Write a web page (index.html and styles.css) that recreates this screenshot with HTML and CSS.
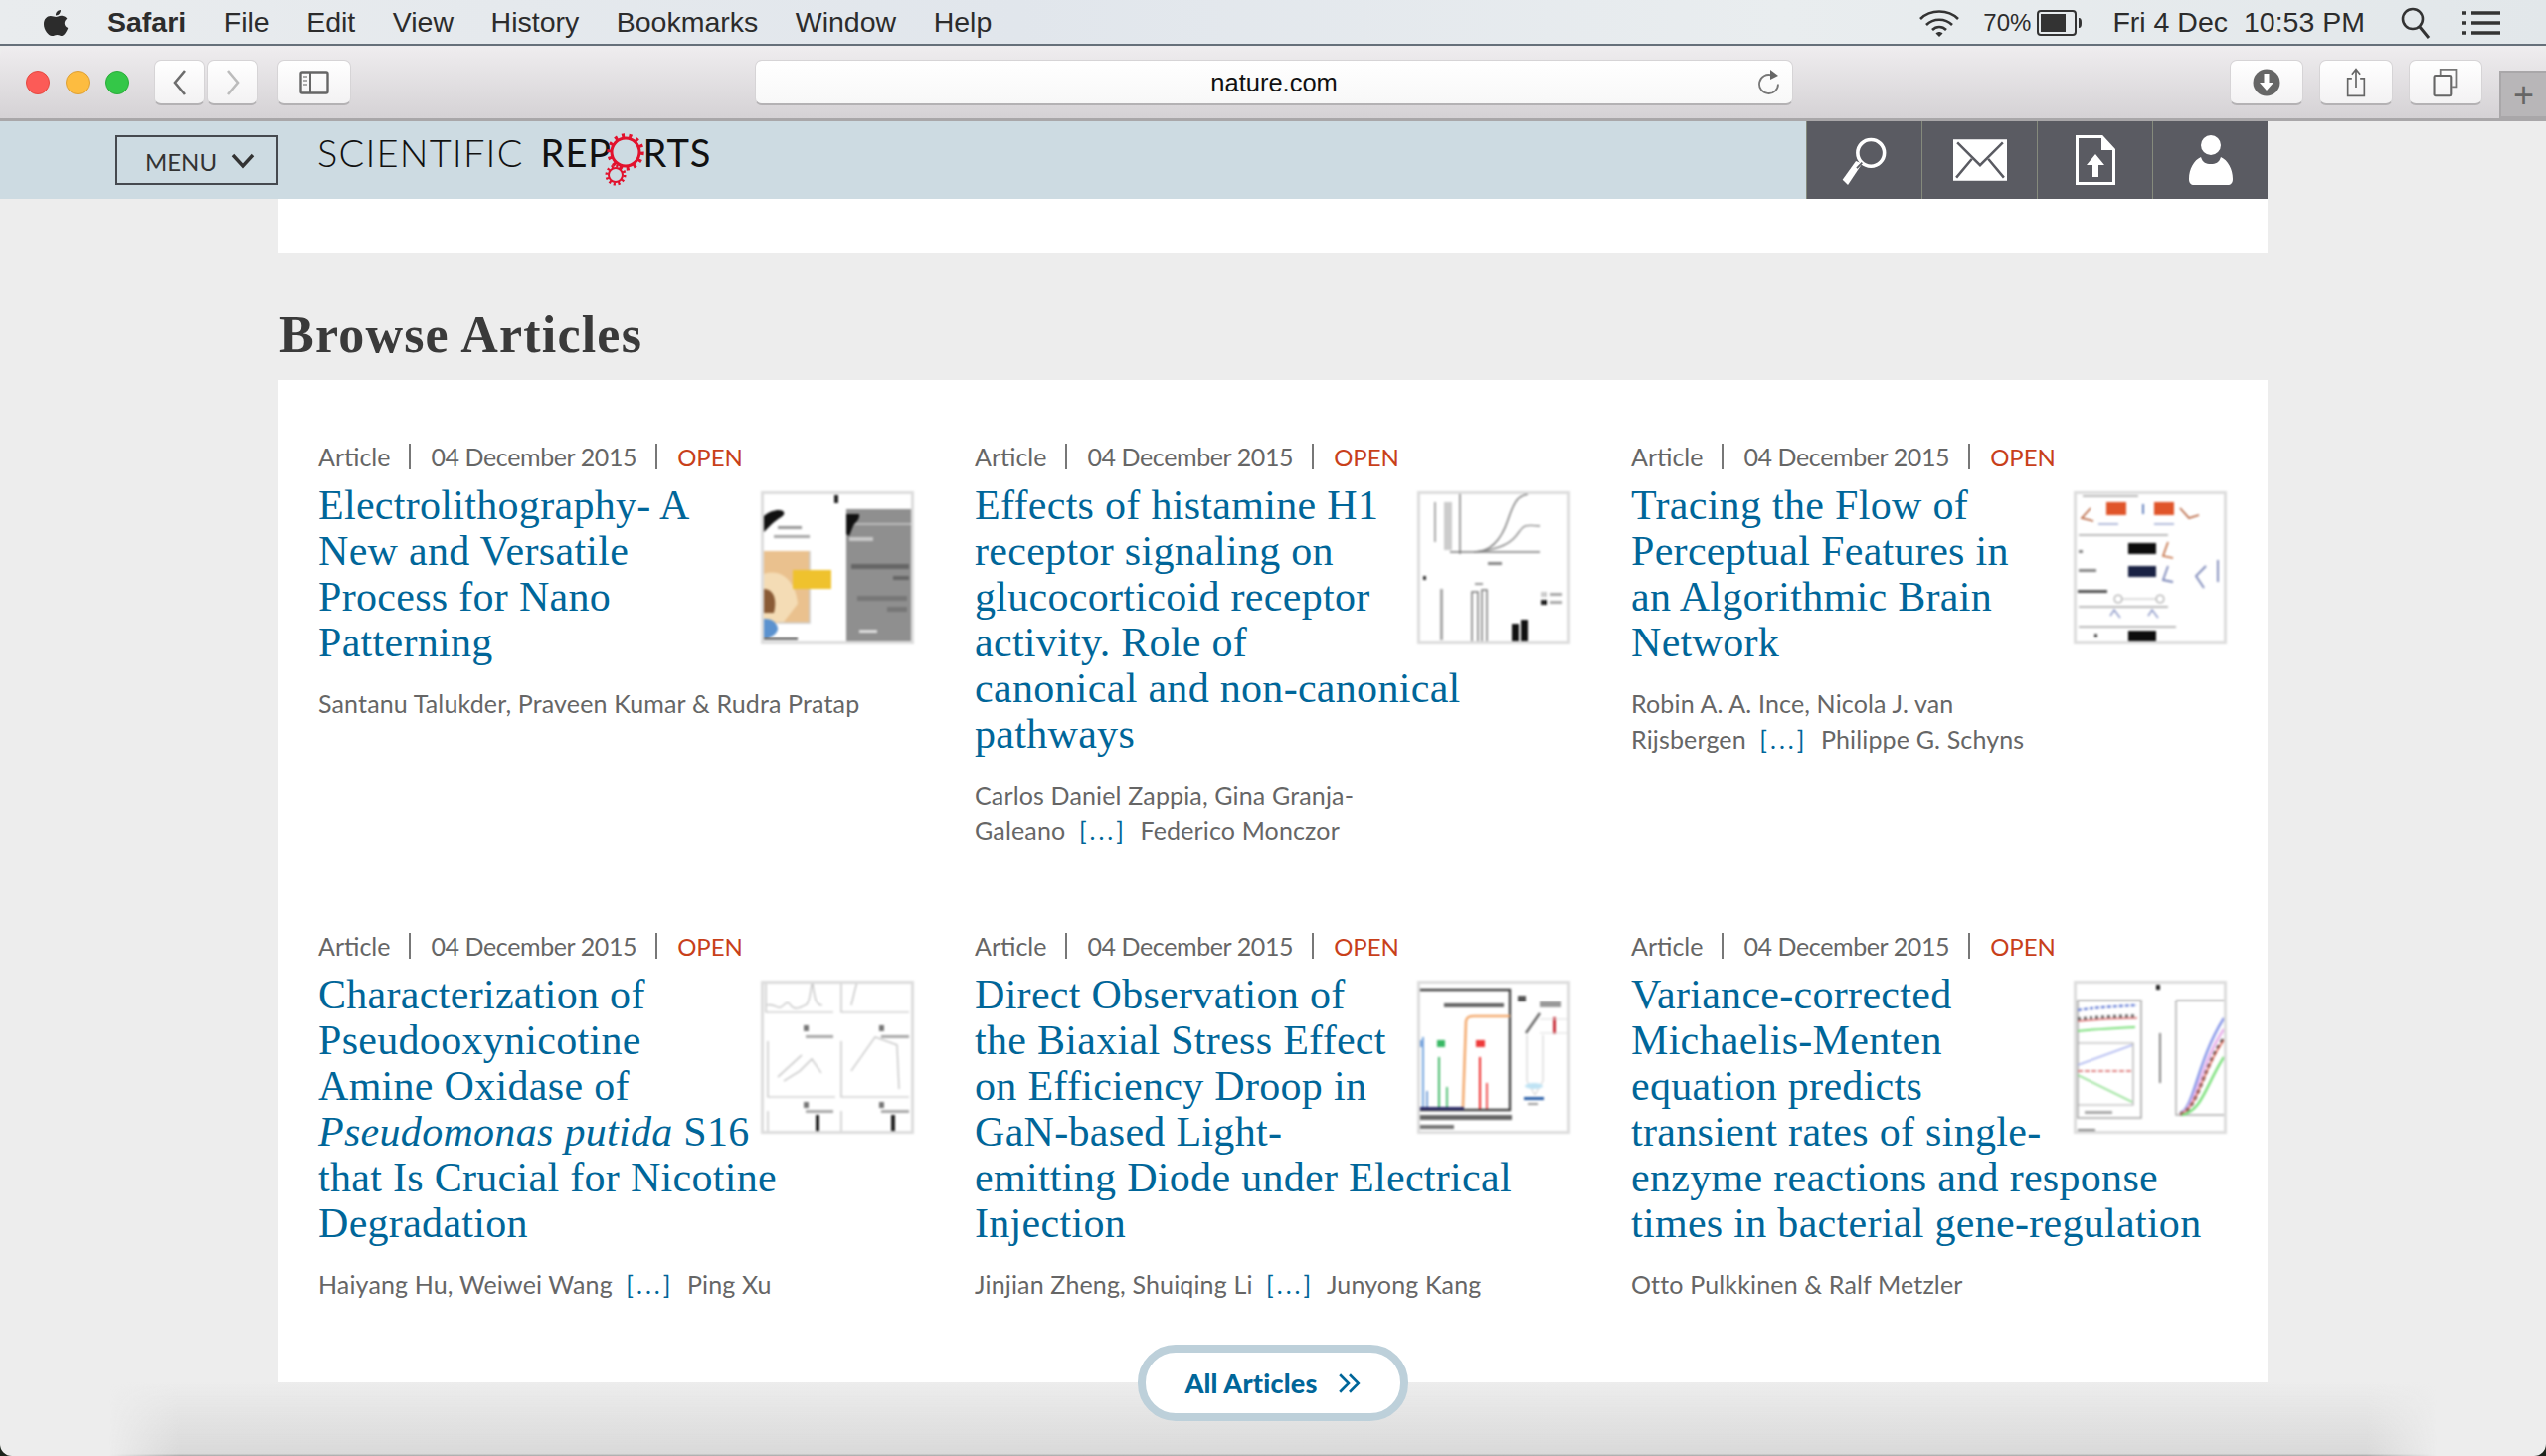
FILE: index.html
```html
<!DOCTYPE html>
<html lang="en">

<head>
    <meta charset="UTF-8">
    <meta name="viewport" content="width=device-width, initial-scale=1.0">
    <title>Scientific Reports</title>
    <link rel="stylesheet" href="styles.css">
</head>

<body>
    <div class="window">
        <div class="menubar">
            <svg class="apple" viewBox="0 0 28 32"><path d="M19 1c.2 2.400-1.900 5.700-5 5.500-.3-2.700 2-5.300 5-5.500zM14.300 8c1.200 0 2.800-1.300 5.200-1.300 1 0 4 .2 5.900 3-3.700 2.300-3.300 7.600.9 9.400-1 2.800-3.500 7.900-6.100 7.900-1.800 0-2.400-1.100-4.700-1.100-2.200 0-3 1.100-4.700 1.100C7.500 28 2 21.400 2 15.300 2 10 5.400 7 8.700 7c2.300 0 4.200 1 5.600 1z" transform="translate(0 2)"/></svg>
            <b class="menu-item">Safari</b>
            <span class="menu-item">File</span>
            <span class="menu-item">Edit</span>
            <span class="menu-item">View</span>
            <span class="menu-item">History</span>
            <span class="menu-item">Bookmarks</span>
            <span class="menu-item">Window</span>
            <span class="menu-item">Help</span>
            <div class="status">
                <svg class="wifi" viewBox="0 0 42 30"><g fill="none" stroke="#333" stroke-width="2.600"><path d="M2 11c10-10 28-10 38 0"/><path d="M8 17c7-7 19-7 26 0"/><path d="M14 22c4-4 10-4 14 0"/></g><path d="M17.500 25.500 21 29l3.500-3.500c-2-2-5-2-7 0z" fill="#333"/></svg>
                <span class="pct">70%</span>
                <svg class="battery" viewBox="0 0 46 28"><rect x="1" y="2" width="38" height="24" rx="3" fill="none" stroke="#333" stroke-width="2"/><rect x="4" y="5" width="25" height="18" fill="#333"/><path d="M42 9c2 0 3 1 3 5s-1 5-3 5z" fill="#333"/></svg>
                <span class="clock">Fri 4 Dec</span>
                <span class="clock clock-time">10:53 PM</span>
                <svg class="status-search" viewBox="0 0 30 32"><circle cx="12" cy="12" r="10" fill="none" stroke="#333" stroke-width="2.600"/><path d="M19 20l9 11" stroke="#333" stroke-width="3"/></svg>
                <svg class="status-list" viewBox="0 0 38 24"><path d="M0 2h4M9 2h29M0 12h4M9 12h29M0 22h4M9 22h29" stroke="#333" stroke-width="3.400"/></svg>
            </div>
        </div>

        <div class="toolbar">
            <div class="lights">
                <i class="light red"></i>
                <i class="light yellow"></i>
                <i class="light green"></i>
            </div>
            <div class="nav-pair">
                <div class="tool-btn back"><svg viewBox="0 0 20 30"><path d="M15 3 5 15l10 12" fill="none" stroke="#6d6d6d" stroke-width="2.600"/></svg></div>
                <div class="tool-btn back"><svg viewBox="0 0 20 30"><path d="M5 3l10 12L5 27" fill="none" stroke="#bcbcbc" stroke-width="2.600"/></svg></div>
            </div>
            <div class="tool-btn wide sidebar-btn"><svg viewBox="0 0 30 24"><rect x="1.500" y="1.500" width="27" height="21" rx="1.500" fill="none" stroke="#666" stroke-width="2.400"/><path d="M11 2v20" stroke="#666" stroke-width="2"/><path d="M4 6h4M4 10h4M4 14h4" stroke="#aaa" stroke-width="2"/></svg></div>
            <div class="urlbar">
                <span class="url">nature.com</span>
                <svg class="reload" viewBox="0 0 24 30"><path d="M14.500 7.500a9.500 9.500 0 1 0 6.500 9" fill="none" stroke="#777" stroke-width="1.800"/><path d="M13 2l8 6-8 4z" fill="#666"/></svg>
            </div>
            <div class="tool-btn wide"><svg viewBox="0 0 30 30"><circle cx="15" cy="15" r="13.500" fill="#666"/><path d="M12.500 6h5v9h4.500L15 23l-7-8h4.500z" fill="#fff"/></svg></div>
            <div class="tool-btn wide"><svg viewBox="0 0 26 36"><path d="M8 13H3v21h20V13h-5M13 24V3M8 8l5-6 5 6" fill="none" stroke="#666" stroke-width="2"/></svg></div>
            <div class="tool-btn wide"><svg viewBox="0 0 30 34"><path d="M9 8V2h19v20h-6" fill="none" stroke="#777" stroke-width="2"/><rect x="2" y="9" width="19" height="23" rx="1.500" fill="none" stroke="#666" stroke-width="2.400"/></svg></div>
            <div class="new-tab"></div>
        </div>

        <div class="site-nav">
            <div class="site-bar">
                <div class="menu-btn">MENU <svg class="menu-arrow" viewBox="0 0 24 16"><path d="M2 2l10 11L22 2" fill="none" stroke="#333" stroke-width="3.400"/></svg></div>
                <div class="logo">
                    <span class="logo-thin">SCIENTIFIC</span>
                    <span class="logo-bold">REP<span class="logo-o">O</span>RTS</span>
                    <svg class="logo-gears" viewBox="0 0 48 66">
                        <g fill="none" stroke="#e2122d">
                            <circle cx="23" cy="19" r="14" stroke-width="3"/>
                            <circle cx="23" cy="19" r="16.500" stroke-width="4.400" stroke-dasharray="3 4.330"/>
                            <circle cx="13" cy="42" r="7" stroke-width="2"/>
                            <circle cx="13" cy="42" r="9" stroke-width="3" stroke-dasharray="2.200 2.510"/>
                        </g>
                    </svg>
                </div>
                <div class="site-icons">
                    <div class="site-icon"><svg viewBox="0 0 54 56"><circle cx="34" cy="20" r="15" fill="none" stroke="#fff" stroke-width="4"/><path d="M24 32l-7-3-15 21 6 6z" fill="#fff"/><path d="M24 31l-6 6" stroke="#5a5b62" stroke-width="2"/></svg></div>
                    <div class="site-icon"><svg viewBox="0 0 52 40"><rect width="52" height="40" fill="#fff"/><path d="M4 3l22 22L48 3M3 37l15-18M49 37 34 19" fill="none" stroke="#5a5b62" stroke-width="2.400"/></svg></div>
                    <div class="site-icon"><svg viewBox="0 0 40 50"><path d="M1.500 1.500h25l12 13v34h-37z" fill="none" stroke="#fff" stroke-width="3"/><path d="M26 2v13h12z" fill="#fff"/><path d="M20 19l9 11h-6v12h-6V30h-6z" fill="#fff"/></svg></div>
                    <div class="site-icon"><svg viewBox="0 0 46 50"><ellipse cx="23" cy="10" rx="10" ry="10" fill="#fff"/><path d="M13 22c2 6 5 7 10 7s8-1 10-7c7 3 12 12 12 22 0 4-2 6-5 6H6c-3 0-5-2-5-6 0-10 5-19 12-22z" fill="#fff"/></svg></div>
                </div>
            </div>
        </div>

        <div class="page">
            <div class="strip"></div>
            <h1 class="section-title">Browse Articles</h1>

            <div class="card">
                <div class="article">
                    <div class="meta"><span>Article</span><i></i><span class="date">04 December 2015</span><i></i><span class="open">OPEN</span></div>
                    <svg class="thumb" viewBox="0 0 148 148">
                        <path d="M0 22c6-6 18-8 20-4 2 4-6 6-12 12l-8 8z" fill="#111"/>
                        <rect x="14" y="32" width="24" height="3" fill="#999"/>
                        <rect x="10" y="41" width="36" height="3" fill="#aaa"/>
                        <rect x="0" y="57" width="46" height="72" fill="#eac18e"/>
                        <path d="M0 80c18-6 32 8 34 30l-14 18H0z" fill="#f4dcb5"/>
                        <path d="M0 95c8 0 14 8 10 24H0z" fill="#8a5b36"/>
                        <path d="M46 57v72H14" fill="none" stroke="#ccc" stroke-width="1.500"/>
                        <rect x="29" y="76" width="39" height="19" fill="#efc22e"/>
                        <path d="M0 125c10-1 14 6 14 10s-6 9-14 10z" fill="#5b92cf"/>
                        <rect x="0" y="144" width="34" height="3" fill="#777"/>
                        <rect x="71" y="1" width="4" height="8" fill="#222"/>
                        <rect x="83" y="15" width="65" height="133" fill="#8f8f8f"/>
                        <rect x="83" y="29" width="65" height="2" fill="#bbb"/>
                        <path d="M83 20h13c1 6-4 8-6 12l-4 10-3-2z" fill="#111"/>
                        <rect x="86" y="43" width="24" height="4" fill="#c8c8c8"/>
                        <rect x="88" y="70" width="58" height="5" fill="#666"/>
                        <rect x="130" y="82" width="16" height="4" fill="#666"/>
                        <rect x="94" y="102" width="50" height="5" fill="#777"/>
                        <rect x="124" y="113" width="20" height="5" fill="#777"/>
                        <rect x="96" y="136" width="18" height="3" fill="#ddd"/>
                    </svg>
                    <h2 class="title">Electrolithography- A<br>New and Versatile<br>Process for Nano<br>Patterning</h2>
                    <p class="authors">Santanu Talukder, Praveen Kumar &amp; Rudra Pratap</p>
                </div>

                <div class="article">
                    <div class="meta"><span>Article</span><i></i><span class="date">04 December 2015</span><i></i><span class="open">OPEN</span></div>
                    <svg class="thumb" viewBox="0 0 148 148">
                        <g fill="none" stroke="#777" stroke-width="1.400">
                            <path d="M40 0v60M30 58h90"/>
                            <path d="M54 58c14 0 26-8 34-32S100 2 108 0"/>
                            <path d="M54 58c20-2 34-6 42-16s6-12 24-10" stroke="#888"/>
                        </g>
                        <rect x="14" y="8" width="2" height="40" fill="#aaa"/>
                        <rect x="24" y="8" width="8" height="48" fill="#ccc"/>
                        <rect x="68" y="68" width="14" height="3" fill="#888"/>
                        <rect x="3" y="82" width="3" height="4" fill="#333"/>
                        <rect x="20" y="95" width="3" height="52" fill="#aaa"/>
                        <path d="M52 148v-50h6v50M62 148v-52h5v52M55 90h8" fill="#fff" stroke="#777" stroke-width="1.500"/>
                        <rect x="92" y="130" width="7" height="18" fill="#111"/>
                        <rect x="101" y="126" width="7" height="22" fill="#111"/>
                        <rect x="121" y="98" width="7" height="5" fill="#ccc"/>
                        <rect x="121" y="106" width="7" height="5" fill="#222"/>
                        <rect x="131" y="99" width="12" height="3" fill="#aaa"/>
                        <rect x="131" y="107" width="12" height="3" fill="#aaa"/>
                    </svg>
                    <h2 class="title">Effects of histamine H1<br>receptor signaling on<br>glucocorticoid receptor<br>activity. Role of<br>canonical and non-canonical<br>pathways</h2>
                    <p class="authors">Carlos Daniel Zappia, Gina Granja-<br>Galeano <span class="more">[...]</span> Federico Monczor</p>
                </div>

                <div class="article">
                    <div class="meta"><span>Article</span><i></i><span class="date">04 December 2015</span><i></i><span class="open">OPEN</span></div>
                    <svg class="thumb" viewBox="0 0 148 148">
                        <rect x="6" y="1" width="56" height="2" fill="#bbb"/>
                        <rect x="30" y="8" width="20" height="13" fill="#e0552a"/>
                        <rect x="78" y="8" width="20" height="13" fill="#e0552a"/>
                        <rect x="66" y="10" width="2" height="10" fill="#6a86c0"/>
                        <path d="M14 14 5 24l12 3M104 14l9 10 10-3" fill="none" stroke="#b6603a" stroke-width="1.600"/>
                        <path d="M22 30h20M78 30h20" stroke="#9aa6d0" stroke-width="1.500"/>
                        <rect x="2" y="40" width="90" height="2" fill="#bbb"/>
                        <rect x="52" y="49" width="28" height="11" fill="#0d0d0d"/>
                        <path d="M92 48l-5 14 10 2" fill="none" stroke="#c26a3d" stroke-width="1.600"/>
                        <rect x="2" y="56" width="4" height="3" fill="#888"/>
                        <rect x="52" y="72" width="28" height="11" fill="#1a2244"/>
                        <path d="M92 72l-5 14 10 2M130 72l-10 10 8 12M142 66v22" fill="none" stroke="#7a86b8" stroke-width="1.800"/>
                        <rect x="2" y="75" width="18" height="3" fill="#888"/>
                        <rect x="1" y="96" width="30" height="3" fill="#555"/>
                        <circle cx="42" cy="105" r="4" fill="none" stroke="#999"/>
                        <circle cx="84" cy="105" r="4" fill="none" stroke="#999"/>
                        <path d="M46 105h34" stroke="#bbb"/>
                        <rect x="2" y="112" width="90" height="2" fill="#bbb"/>
                        <path d="M34 122l4-6 6 8M72 122l4-6 6 8" fill="none" stroke="#8b97c7" stroke-width="1.400"/>
                        <rect x="2" y="132" width="98" height="2" fill="#bbb"/>
                        <rect x="52" y="137" width="28" height="11" fill="#0d0d0d"/>
                        <rect x="18" y="140" width="3" height="4" fill="#555"/>
                    </svg>
                    <h2 class="title">Tracing the Flow of<br>Perceptual Features in<br>an Algorithmic Brain<br>Network</h2>
                    <p class="authors">Robin A. A. Ince, Nicola J. van<br>Rijsbergen <span class="more">[...]</span> Philippe G. Schyns</p>
                </div>

                <div class="article">
                    <div class="meta"><span>Article</span><i></i><span class="date">04 December 2015</span><i></i><span class="open">OPEN</span></div>
                    <svg class="thumb" viewBox="0 0 148 148">
                        <g fill="none" stroke="#bbb" stroke-width="1.200">
                            <path d="M2 0v29h68M78 0v29h68"/>
                            <path d="M3 22c8-2 10 4 14 2s6-8 10-2 10 2 16-1c4-4 4-22 6-23M49 0c2 14 3 22 10 22"/>
                            <path d="M88 22c2-8 3-14 6-24"/>
                            <path d="M4 58v56h68M78 58v56h68"/>
                            <path d="M20 98l16-10 12-12 10 14M14 94l24-22M88 88l24-34 22 8 2 44"/>
                        </g>
                        <rect x="42" y="52" width="28" height="3" fill="#aaa"/>
                        <rect x="118" y="52" width="28" height="3" fill="#aaa"/>
                        <rect x="40" y="42" width="5" height="6" fill="#777"/>
                        <rect x="116" y="42" width="5" height="6" fill="#777"/>
                        <rect x="42" y="127" width="28" height="3" fill="#aaa"/>
                        <rect x="118" y="127" width="28" height="3" fill="#aaa"/>
                        <rect x="40" y="119" width="5" height="6" fill="#777"/>
                        <rect x="116" y="119" width="5" height="6" fill="#777"/>
                        <path d="M4 128v20M78 128v20" stroke="#ccc" stroke-width="1.600"/>
                        <rect x="52" y="132" width="4" height="16" fill="#222"/>
                        <rect x="128" y="132" width="4" height="16" fill="#222"/>
                    </svg>
                    <h2 class="title">Characterization of<br>Pseudooxynicotine<br>Amine Oxidase of<br><em>Pseudomonas putida</em> S16<br>that Is Crucial for Nicotine<br>Degradation</h2>
                    <p class="authors">Haiyang Hu, Weiwei Wang <span class="more">[...]</span> Ping Xu</p>
                </div>

                <div class="article">
                    <div class="meta"><span>Article</span><i></i><span class="date">04 December 2015</span><i></i><span class="open">OPEN</span></div>
                    <svg class="thumb" viewBox="0 0 148 148">
                        <path d="M0 6h90v121H0" fill="none" stroke="#444" stroke-width="2.400"/>
                        <rect x="24" y="20" width="60" height="4" fill="#666"/>
                        <path d="M43 124l3-86c1-4 3-5 8-5h36" fill="none" stroke="#f4ac72" stroke-width="2.600"/>
                        <path d="M3 54v72" stroke="#6a9fdc" stroke-width="1.800"/>
                        <path d="M19 74v52" stroke="#2fb45a" stroke-width="1.800"/>
                        <path d="M60 74v52" stroke="#ee2a2a" stroke-width="2"/>
                        <path d="M67 100v26" stroke="#ee2a2a" stroke-width="1.600"/>
                        <path d="M27 104v22" stroke="#2fb45a" stroke-width="1.600"/>
                        <path d="M7 108v18" stroke="#5a8ed0" stroke-width="1.600"/>
                        <rect x="0" y="57" width="4" height="7" fill="#7aa6de"/>
                        <rect x="17" y="57" width="8" height="7" fill="#39b864"/>
                        <rect x="56" y="57" width="9" height="7" fill="#ee3a3a"/>
                        <rect x="0" y="124" width="44" height="3" fill="#2a2a66"/>
                        <rect x="0" y="132" width="92" height="5" fill="#666"/>
                        <rect x="0" y="142" width="34" height="4" fill="#777"/>
                        <rect x="98" y="12" width="8" height="6" fill="#555"/>
                        <path d="M106 50l14-20" stroke="#666" stroke-width="2.400"/>
                        <path d="M107 52v46l8 14 8-14V52" fill="none" stroke="#ccc"/>
                        <rect x="120" y="18" width="22" height="6" fill="#999"/>
                        <rect x="134" y="34" width="3" height="17" fill="#c9303a"/>
                        <path d="M120 36h28M120 50h28" stroke="#ddd"/>
                        <ellipse cx="114" cy="103" rx="9" ry="3" fill="#bfe3f4"/>
                        <rect x="104" y="114" width="20" height="3" fill="#2a5fa8"/>
                        <rect x="108" y="120" width="10" height="2" fill="#999"/>
                    </svg>
                    <h2 class="title">Direct Observation of<br>the Biaxial Stress Effect<br>on Efficiency Droop in<br>GaN-based Light-<br>emitting Diode under Electrical<br>Injection</h2>
                    <p class="authors">Jinjian Zheng, Shuiqing Li <span class="more">[...]</span> Junyong Kang</p>
                </div>

                <div class="article">
                    <div class="meta"><span>Article</span><i></i><span class="date">04 December 2015</span><i></i><span class="open">OPEN</span></div>
                    <svg class="thumb" viewBox="0 0 148 148">
                        <rect x="1" y="17" width="64" height="118" fill="none" stroke="#aaa" stroke-width="1.600"/>
                        <path d="M1 60h56v62H1" fill="none" stroke="#aaa" stroke-width="1.200"/>
                        <path d="M1 27c20-3 40-4 60-5" stroke="#6e85d8" stroke-width="2.400" stroke-dasharray="4 2" fill="none"/>
                        <path d="M1 36c20-2 40-3 60-3" stroke="#666" stroke-width="3.400" stroke-dasharray="3 3" fill="none"/>
                        <path d="M1 38c20-2 40-3 60-3" stroke="#e07070" stroke-width="1.400" fill="none"/>
                        <path d="M1 48c20-2 40-3 58-4" stroke="#7ce07c" stroke-width="2" fill="none"/>
                        <path d="M1 82l55-20" stroke="#a9b3ef" stroke-width="1.800"/>
                        <path d="M1 88h55" stroke="#e08686" stroke-width="2" stroke-dasharray="5 2"/>
                        <path d="M1 92l55 27" stroke="#8fe08f" stroke-width="1.800"/>
                        <rect x="8" y="128" width="28" height="3" fill="#aaa"/>
                        <rect x="1" y="146" width="18" height="2" fill="#888"/>
                        <rect x="80" y="1" width="4" height="5" fill="#222"/>
                        <path d="M100 17h48M100 17v115h48" fill="none" stroke="#aaa" stroke-width="1.400"/>
                        <rect x="83" y="50" width="2" height="50" fill="#888"/>
                        <path d="M104 130c14-4 16-50 44-95" stroke="#8494e8" stroke-width="2.400" fill="none"/>
                        <path d="M104 131c16-4 20-50 44-85" stroke="#eab8ec" stroke-width="3" fill="none"/>
                        <path d="M104 131c18-4 22-44 44-76" stroke="#444" stroke-width="3" stroke-dasharray="4 3" fill="none"/>
                        <path d="M104 131c18-4 22-44 44-74" stroke="#e46a5a" stroke-width="1.400" fill="none"/>
                        <path d="M106 132c20-4 24-30 42-58" stroke="#7ae07a" stroke-width="2.400" fill="none"/>
                    </svg>
                    <h2 class="title">Variance-corrected<br>Michaelis-Menten<br>equation predicts<br>transient rates of single-<br>enzyme reactions and response<br>times in bacterial gene-regulation</h2>
                    <p class="authors">Otto Pulkkinen &amp; Ralf Metzler</p>
                </div>
            </div>

            <div class="all-row">
                <a class="all-btn">All Articles <svg class="chevrons" viewBox="0 0 22 20"><path d="M2 2l8 8-8 8M11 2l8 8-8 8" fill="none" stroke="#069" stroke-width="2.400"/></svg></a>
            </div>
        </div>
    </div>
</body>

</html>
```

FILE: styles.css
```css
* {
    box-sizing: border-box;
}

html,
body {
    margin: 0;
    padding: 0;
    height: 100%;
}

body {
    background: #1c241c;
    overflow: hidden;
}

.window {
    position: relative;
    display: flex;
    flex-direction: column;
    height: 1464px;
    overflow: hidden;
    background: #ededed;
    border-radius: 0 0 12px 12px;
    font-family: "Liberation Sans", Arial, sans-serif;
}

/* shadow at the bottom of the page */
.window::after {
    content: "";
    position: absolute;
    left: 110px;
    right: 110px;
    bottom: 0;
    height: 74px;
    background: linear-gradient(#ededed00, #d9d9d9 97%, #a5a5a5);
    -webkit-mask-image: linear-gradient(90deg, transparent, #000 3%, #000 97%, transparent);
}

/* mac menu bar */
.menubar {
    display: flex;
    align-items: center;
    flex: none;
    height: 46px;
    padding: 1px 46px 0 42px;
    background: linear-gradient(90deg, #e9ecee, #e1e6ec 40%, #e9edef 70%, #e2e7ea);
    border-bottom: 2px solid #66707a;
    color: #2c2c2c;
    font-size: 28.500px;
}

.apple {
    width: 28px;
    height: 32px;
    fill: #2c2c2c;
    margin-right: 38px;
}

.menu-item {
    margin-right: 37.500px;
}

.status {
    display: flex;
    align-items: center;
    margin-left: auto;
}

.wifi {
    width: 42px;
    height: 30px;
}

.pct {
    margin-left: 23px;
    font-size: 24px;
}

.battery {
    width: 46px;
    height: 28px;
    margin-left: 6px;
}

.clock {
    margin-left: 30px;
}

.clock-time {
    margin-left: 16px;
}

.status-search {
    width: 30px;
    height: 32px;
    margin-left: 36px;
}

.status-list {
    width: 38px;
    height: 24px;
    margin-left: 32px;
}

/* safari toolbar */
.toolbar {
    display: flex;
    align-items: center;
    flex: none;
    position: relative;
    height: 76px;
    padding: 1px 64px 0 26px;
    background: linear-gradient(#efedef, #d5d2d5);
    border-bottom: 3px solid #a9a7a9;
    border-radius: 10px 10px 0 0;
}

.lights {
    display: flex;
    gap: 16px;
}

.light {
    width: 24px;
    height: 24px;
    border-radius: 50%;
}

.red {
    background: #fc5b57;
    border: 1px solid #e5483f;
}

.yellow {
    background: #fdbc40;
    border: 1px solid #dea034;
}

.green {
    background: #34c748;
    border: 1px solid #2aac3a;
}

.nav-pair {
    display: flex;
    gap: 2px;
    margin-left: 25px;
}

.tool-btn {
    display: flex;
    align-items: center;
    justify-content: center;
    height: 46px;
    background: linear-gradient(#fff, #f3f2f3);
    border: 1px solid #d6d4d6;
    border-bottom: 2px solid #b4b2b4;
    border-radius: 7px;
}

.tool-btn svg {
    height: 30px;
    width: 30px;
}

.back {
    width: 51px;
}

.wide {
    width: 74px;
    margin-left: 16px;
}

.sidebar-btn {
    margin-left: 20px;
}

.urlbar {
    position: relative;
    display: flex;
    align-items: center;
    justify-content: center;
    width: 1045px;
    height: 46px;
    margin: 0 423px 0 406px;
    padding-top: 2px;
    background: linear-gradient(#fff, #f8f8f8);
    border: 1px solid #d6d4d6;
    border-bottom: 2px solid #b4b2b4;
    border-radius: 7px;
    color: #111;
    font-size: 25.500px;
}

.reload {
    position: absolute;
    right: 11px;
    top: 7px;
    width: 24px;
    height: 30px;
}

.new-tab {
    position: absolute;
    right: 0;
    bottom: 0;
    width: 47px;
    height: 48px;
    background: #b8b6b8;
    border: 2px solid #a9a7a9;
    border-right: 0;
}

.new-tab::before {
    content: "+";
    display: block;
    text-align: center;
    color: #666;
    font-size: 36px;
    font-weight: 200;
    line-height: 46px;
}

/* site navigation */
.site-nav {
    flex: none;
    height: 78px;
}

.site-bar {
    display: flex;
    align-items: flex-start;
    width: 2280px;
    height: 78px;
    padding-left: 116px;
    background: #cddbe2;
}

.menu-btn {
    display: flex;
    align-items: center;
    justify-content: center;
    gap: 14px;
    width: 164px;
    height: 50px;
    margin-top: 14px;
    padding: 2px 0 0 6px;
    border: 2px solid #45494f;
    color: #333;
    font-family: "Lato", sans-serif;
    font-size: 24px;
}

.menu-arrow {
    width: 24px;
    height: 16px;
}

.logo {
    position: relative;
    display: flex;
    gap: 17px;
    margin: 8px 0 0 39px;
    color: #111;
    font-family: "Lato", sans-serif;
    font-size: 38px;
    line-height: 46px;
}

.logo-thin {
    font-weight: 300;
    letter-spacing: 1.200px;
}

.logo-bold {
    font-weight: 400;
    letter-spacing: 1px;
}

.logo-o {
    color: transparent;
}

.logo-gears {
    position: absolute;
    left: 287px;
    top: 4px;
    width: 48px;
    height: 66px;
}

.site-icons {
    display: flex;
    margin-left: auto;
}

.site-icon {
    display: flex;
    align-items: center;
    justify-content: center;
    width: 116px;
    height: 78px;
    background: #5a5b62;
    border-left: 1px solid #858a7c;
}

.site-icon svg {
    width: 54px;
    height: 50px;
}

/* page */
.page {
    padding: 0 280px;
}

.strip {
    height: 54px;
    background: #fff;
}

.section-title {
    margin: 53px 0 15px;
    padding-left: 1px;
    color: #3a3a3a;
    font-family: "Liberation Serif", serif;
    font-size: 52px;
    line-height: 60px;
    font-weight: 700;
    letter-spacing: 1.200px;
}

.card {
    display: grid;
    grid-template-columns: repeat(3, 600px);
    gap: 82px 60px;
    height: 1008px;
    align-content: start;
    padding: 61px 40px 0;
    background: #fff;
}

.meta {
    display: flex;
    align-items: center;
    height: 32px;
    color: #666;
    font-family: "Lato", sans-serif;
    font-size: 25px;
}

.meta i {
    width: 2px;
    height: 26px;
    margin: 0 20px 0 19px;
    background: #777;
}

.date {
    letter-spacing: -0.400px;
}

.open {
    color: #c8401a;
    font-size: 24px;
}

.thumb {
    float: right;
    width: 154px;
    height: 154px;
    margin: 19px 1px 0 0;
    background: #fff;
    border: 3px solid #ddd;
    filter: blur(1px);
}

.title {
    margin: 10px 0 0;
    color: #069;
    font-family: "Liberation Serif", serif;
    font-size: 42px;
    line-height: 46px;
    font-weight: 400;
    letter-spacing: 0.300px;
}

.authors {
    margin: 20px 0 0;
    color: #666;
    font-family: "Lato", sans-serif;
    font-size: 25px;
    line-height: 36px;
    letter-spacing: 0.150px;
}

.more {
    margin: 0 7px;
    color: #069;
    letter-spacing: 3px;
}

.all-row {
    position: relative;
    z-index: 1;
    display: flex;
    justify-content: center;
    margin-top: -38px;
}

.all-btn {
    display: flex;
    align-items: center;
    justify-content: center;
    gap: 20px;
    width: 272px;
    height: 77px;
    background: #fff;
    border: 8px solid #bdd0da;
    border-radius: 38px;
    color: #069;
    font-family: "Lato", sans-serif;
    font-size: 27px;
    font-weight: 900;
    letter-spacing: 0.200px;
}

.chevrons {
    width: 24px;
    height: 22px;
}
```
